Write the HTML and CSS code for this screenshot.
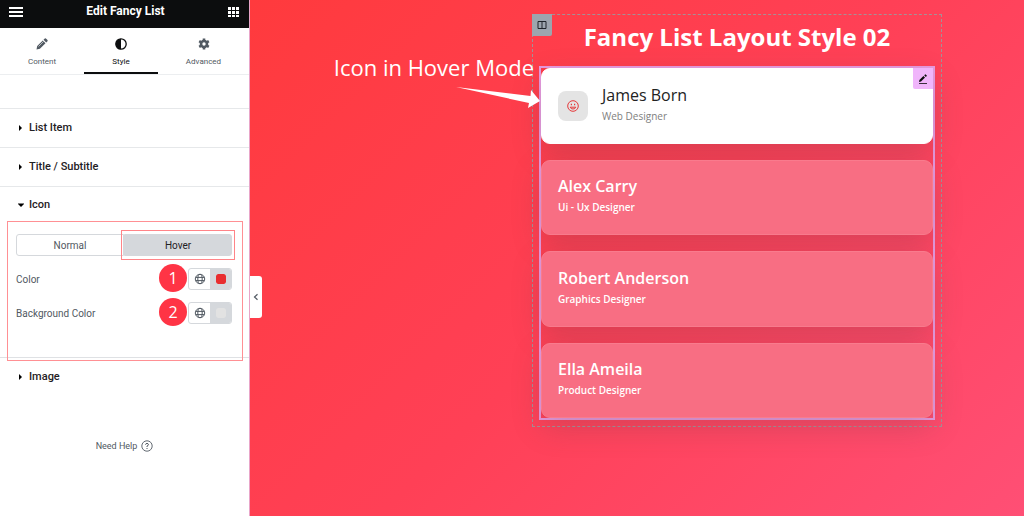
FILE: index.html
```
<!DOCTYPE html>
<html lang="en">
<head>
<meta charset="utf-8">
<title>Edit Fancy List</title>
<link rel="stylesheet" href="styles.css">
</head>
<body>
<svg class="defs" aria-hidden="true">
  <symbol id="globe" viewBox="0 0 12 12">
    <g fill="none" stroke="currentColor"><circle cx="6" cy="6" r="4.700"/><ellipse cx="6" cy="6" rx="2.200" ry="4.700"/><path d="M1.700 4.400h8.600M1.700 7.600h8.600"/></g>
  </symbol>
</svg>
<div class="editor">
  <aside class="panel">
    <header class="panel-header">
      <button class="icon-button" aria-label="Menu"><svg width="14" height="12" viewBox="0 0 14 12"><path d="M0 2h14M0 6h14M0 10h14" stroke="#fff" stroke-width="2"/></svg></button>
      <h1 class="panel-title">Edit Fancy List</h1>
      <button class="icon-button" aria-label="Widgets"><svg width="12" height="12" viewBox="0 0 12 12" fill="#fff"><path d="M0 1h3v3H0zM4 1h3v3H4zM8 1h3v3H8zM0 5h3v3H0zM4 5h3v3H4zM8 5h3v3H8zM0 9h3v2H0zM4 9h3v2H4zM8 9h3v2H8z"/></svg></button>
    </header>
    <nav class="tabs">
      <button class="tab"><svg width="12" height="12" viewBox="0 0 12 12" fill="#515962"><path d="M0.5 11.5l.7-3.4 5.6-5.6 2.7 2.7-5.6 5.6zM7.5 1.8L8.8.5q.6-.4 1.1 0l1.6 1.6q.4.5 0 1.1l-1.3 1.3z"/><path d="M2.5 8.5l5-5" stroke="#fff" stroke-width=".6"/></svg><span>Content</span></button>
      <button class="tab tab-active"><svg width="12" height="12" viewBox="0 0 12 12"><circle cx="6" cy="6" r="5.2" fill="#fff" stroke="#0c0d0e" stroke-width="1.3"/><path d="M6 .8a5.2 5.2 0 0 0 0 10.4z" fill="#0c0d0e"/></svg><span>Style</span></button>
      <button class="tab"><svg width="12" height="12" viewBox="0 0 12 12"><circle cx="6" cy="6" r="3" fill="none" stroke="#515962" stroke-width="2.6"/><path d="M6 .4v2.5M6 9.1v2.5M1.2 3.2l2.1 1.2M8.7 7.6l2.1 1.2M1.2 8.8l2.1-1.2M8.7 4.4l2.1-1.2" stroke="#515962" stroke-width="2.6"/></svg><span>Advanced</span></button>
    </nav>
    <div class="panel-gap"></div>
    <button class="section-head"><svg width="6" height="8" viewBox="0 0 6 8"><path d="M1 1l3 3-3 3z"/></svg>List Item</button>
    <button class="section-head"><svg width="6" height="8" viewBox="0 0 6 8"><path d="M1 1l3 3-3 3z"/></svg>Title / Subtitle</button>
    <section class="section-open">
      <button class="section-head section-head-open"><svg width="6" height="8" viewBox="0 0 6 8"><path d="M-.5 2.5h7L3 6z"/></svg>Icon</button>
      <div class="controls">
        <div class="states">
          <button class="state">Normal</button>
          <button class="state state-active">Hover</button>
        </div>
        <div class="control">
          <label for="icon-color">Color</label>
          <span class="step">1</span>
          <div class="picker">
            <button class="global" aria-label="Global colors"><svg width="12" height="12"><use href="#globe"/></svg></button>
            <span class="swatch-cell"><input id="icon-color" class="swatch" type="color" value="#e92e30"></span>
          </div>
        </div>
        <div class="control">
          <label for="icon-background">Background Color</label>
          <span class="step">2</span>
          <div class="picker">
            <button class="global" aria-label="Global background colors"><svg width="12" height="12"><use href="#globe"/></svg></button>
            <span class="swatch-cell"><input id="icon-background" class="swatch" type="color" value="#e2e2e2"></span>
          </div>
        </div>
      </div>
    </section>
    <button class="section-head section-last"><svg width="6" height="8" viewBox="0 0 6 8"><path d="M1 1l3 3-3 3z"/></svg>Image</button>
    <a class="help" href="#">Need Help <svg width="12" height="12" viewBox="0 0 12 12" fill="none" stroke="#515962"><circle cx="6" cy="6" r="5.2" stroke-width=".9"/><path d="M4.5 4.7Q4.7 3.4 6 3.4T7.5 4.7Q7.5 5.4 6 6.1V7M6 8v1"/></svg></a>
  </aside>
  <main class="canvas">
    <button class="collapse" aria-label="Hide panel"><svg width="6" height="8" viewBox="0 0 6 8"><path d="M4.5 1.2L1.5 4l3 2.8" fill="none" stroke="#515962" stroke-width="1.2"/></svg></button>
    <div class="note">
      <p class="note-text">Icon in Hover Mode</p>
      <svg class="note-arrow" width="86" height="24" viewBox="0 0 86 24"><path d="M0 2L74.500 11l.5-6L84 16 72 23l1-5Z" fill="#fff"/></svg>
    </div>
    <section class="column">
      <button class="column-handle" aria-label="Edit column"><svg width="10" height="10" viewBox="0 0 10 10"><path d="M1 1.500h8v7H1zM5 1.500v7M1 1.500h8" fill="none" stroke="#20252b"/></svg></button>
      <h2 class="heading">Fancy List Layout Style 02</h2>
      <div class="widget">
        <button class="widget-handle" aria-label="Edit list"><svg width="10" height="10" viewBox="0 0 10 10"><path d="M1 8l.4-2 4-4L7 3.600l-4 4zM6.200 1.300L7.400.2 9 1.700 7.800 2.900z" fill="#0c0d0e"/><path d="M1 9.500h8" stroke="#0c0d0e" stroke-width=".8"/></svg></button>
        <ul class="list">
          <li class="card card-hover">
            <span class="card-icon"><svg width="12" height="12" viewBox="0 0 12 12" fill="none" stroke="#e5393b"><circle cx="6" cy="6" r="5.300"/><path d="M3.200 7.200q.6 1.800 2.800 1.800t2.800-1.800z"/><path d="M3.800 4.500h1.200M7 4.500h1.200" stroke-width="1.400"/></svg></span>
            <div class="card-body"><h3 class="name">James Born</h3><p class="role">Web Designer</p></div>
          </li>
          <li class="card"><div class="card-body"><h3 class="name">Alex Carry</h3><p class="role">Ui - Ux Designer</p></div></li>
          <li class="card"><div class="card-body"><h3 class="name">Robert Anderson</h3><p class="role">Graphics Designer</p></div></li>
          <li class="card"><div class="card-body"><h3 class="name">Ella Ameila</h3><p class="role">Product Designer</p></div></li>
        </ul>
      </div>
    </section>
  </main>
</div>
</body>
</html>
```
FILE: styles.css
```
* { box-sizing: border-box; }
body { margin: 0; font-family: Roboto, "Liberation Sans", sans-serif; color: #515962; }
button { font: inherit; color: inherit; background: none; border: 0; padding: 0; cursor: pointer; }
h1, h2, h3, p, ul { margin: 0; padding: 0; }
svg { display: block; flex: none; }
.defs { position: absolute; width: 0; height: 0; }

.editor { display: flex; min-height: 100vh; }
.panel { flex: 0 0 250px; display: flex; flex-direction: column; background: #fff; border-right: 1px solid #e9a5c9; }
.panel-header { display: flex; align-items: center; justify-content: space-between; height: 28px; padding: 0 9px; background: #0c0d0e; }
.icon-button { display: block; padding-bottom: 4px; }
.panel-title { font-size: 12px; line-height: 16px; font-weight: 700; color: #fff; padding-bottom: 6px; }

.tabs { display: grid; grid-template-columns: 84px 1fr 91px; height: 47px; border-bottom: 1px solid #eceef0; }
.tab { display: flex; flex-direction: column; align-items: center; gap: 6px; padding-top: 10px; font-size: 8px; line-height: 12px; border-bottom: 2px solid transparent; }
.tab-active { color: #0c0d0e; border-color: #0c0d0e; }
.panel-gap { height: 34px; border-bottom: 1px solid #e6e8ea; }

.section-head { display: flex; align-items: center; gap: 5px; height: 39px; padding-left: 18px; border-bottom: 1px solid #e6e8ea; font-size: 11px; line-height: 16px; font-weight: 500; color: #1f2124; text-align: left; }
.section-open { border-bottom: 1px solid #dfe1e4; }
.section-head-open { border: 0; height: 34px; width: 100%; padding-top: 2px; }
.section-last { border: 0; height: 37px; }

.controls { margin: 0 6px -4px 7px; padding: 8px 10px 8px 8px; border: 1px solid #ff9094; }
.states { display: grid; grid-template-columns: 1fr 1fr; height: 30px; align-items: center; }
.state { position: relative; height: 22px; border: 1px solid #d5d8dc; border-radius: 3px 0 0 3px; font-size: 10px; }
.state-active { background: #d5d8dc; color: #1f2124; border-radius: 0 3px 3px 0; }
.state-active::after { content: ""; position: absolute; inset: -5px -4px; border: 1px solid #ff8488; }
.control { position: relative; display: flex; align-items: center; justify-content: space-between; height: 22px; margin-top: 12px; font-size: 10px; }
.states + .control { margin-top: 8px; }
.control:last-child { margin-bottom: 28px; }
.picker { display: grid; grid-template-columns: 1fr 1fr; width: 44px; height: 22px; border: 1px solid #d5d8dc; border-radius: 3px; overflow: hidden; }
.global { display: grid; place-items: center; }
.swatch-cell { display: grid; place-items: center; background: #d5d8dc; }
.swatch { appearance: none; width: 10px; height: 10px; padding: 0; border: 0; border-radius: 2px; overflow: hidden; background: none; }
.swatch::-webkit-color-swatch-wrapper { padding: 0; }
.swatch::-webkit-color-swatch { border: 0; border-radius: 2px; }
.step { position: absolute; right: 45px; top: -4px; width: 28px; height: 28px; border-radius: 50%; background: #ff3445; color: #fff; font: 16px/28px "Open Sans", sans-serif; text-align: center; }
.help { display: flex; align-items: center; justify-content: center; gap: 4px; margin-top: 44px; font-size: 9px; line-height: 14px; color: #515962; text-decoration: none; }

.canvas { flex: 1; position: relative; display: flex; align-items: flex-start; padding: 14px 82px 89px 0; background: linear-gradient(135deg, #ff3a3d 0%, #ff4056 50%, #ff4f75 100%); }
.collapse { position: absolute; left: 0; top: 276px; width: 12px; height: 42px; background: #fff; border-radius: 0 3px 3px 0; display: grid; place-items: center; }
.note { flex: 0 0 282px; display: flex; flex-direction: column; align-items: flex-end; padding-top: 37px; color: #fff; position: relative; z-index: 1; }
.note-text { margin-right: -2px; font: 400 22px/32px "Open Sans", sans-serif; white-space: nowrap; }
.note-arrow { margin: 2px -10px 0 0; }

.column { flex: 1; min-width: 0; position: relative; padding: 7px 6px 6px; border: 1px dashed #a59096; }
.column-handle { position: absolute; left: -1px; top: -1px; width: 20px; height: 22px; background: #9da5ae; border-radius: 0 0 2px 0; display: grid; place-items: center; }
.heading { padding-bottom: 2px; margin-bottom: 12px; color: #fff; font: 700 24px/30px "Open Sans", sans-serif; text-align: center; }
.widget { position: relative; border: 2px solid #e79be0; }
.widget-handle { position: absolute; z-index: 1; right: 0; top: 0; width: 20px; height: 21px; background: #f0b5fb; border-radius: 0 0 0 2px; display: grid; place-items: center; }
.list { display: grid; grid-auto-rows: 1fr; gap: 16px; min-height: 350px; list-style: none; font-family: "Open Sans", sans-serif; }
.card { display: flex; align-items: center; gap: 14px; padding: 0 16px; border: 1px solid #f97b8d; border-radius: 9px; background: #f86e83; color: #fff; box-shadow: 0 10px 30px rgba(80, 60, 70, .22); }
.card-hover { background: #fff; border-color: #fff; color: #222; }
.card-icon { display: grid; place-items: center; width: 30px; height: 30px; border-radius: 8px; background: #e4e4e4; }
.card-body { padding-bottom: 5px; }
.name { font-size: 16px; line-height: 22px; font-weight: 600; }
.role { font-size: 10px; line-height: 14px; font-weight: 600; margin-top: 3px; }
.card-hover .name { font-weight: 400; }
.card-hover .role { font-weight: 400; color: #808080; }
```
